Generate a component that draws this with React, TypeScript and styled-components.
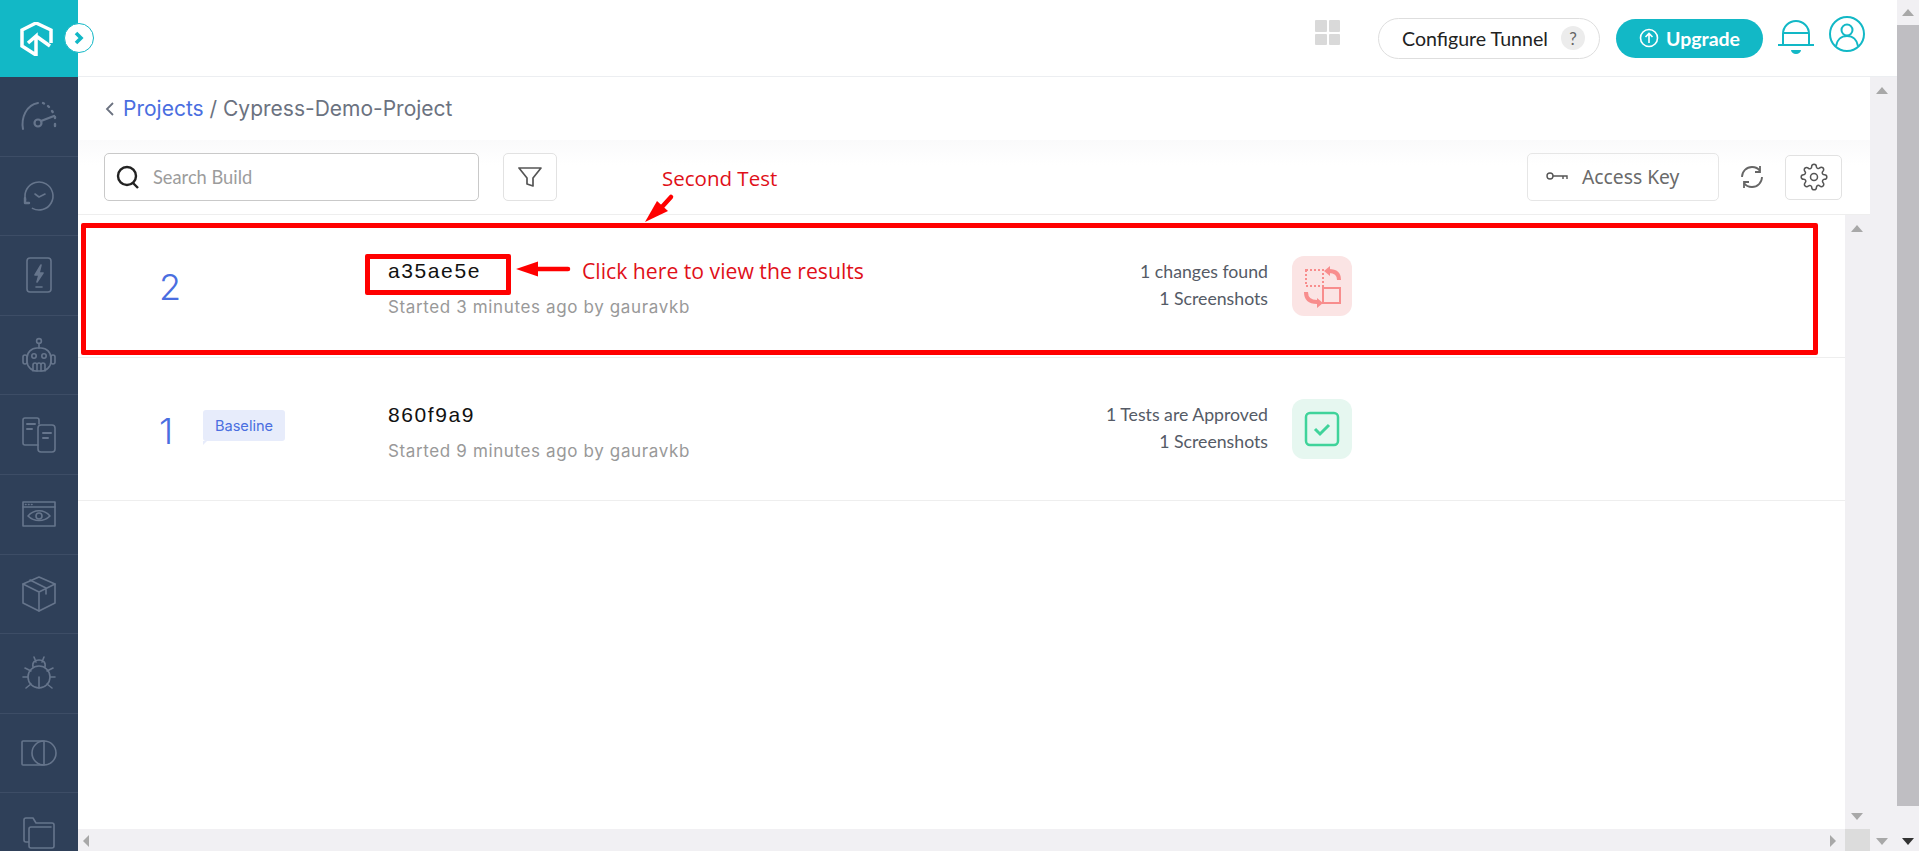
import React from "react";
import styled, { createGlobalStyle } from "styled-components";

const Global = createGlobalStyle`
  html, body { margin: 0; padding: 0; height: 100%; overflow: hidden; background: #fff; }
  #root { height: 851px; }
  * { box-sizing: border-box; }
`;
const Page = styled.div`
  width: 1919px; height: 851px; display: flex; font-family: Inter, sans-serif; background: #fff; position: relative; overflow: hidden;
`;
const Side = styled.aside`
  width: 78px; flex: none; background: #2f4059; display: flex; flex-direction: column;
`;
const LogoCell = styled.div`
  height: 77px; flex: none; background: #12b8c6; display: flex; align-items: center; padding-left: 20px; position: relative;
`;
const Expand = styled.div`
  position: absolute; left: 64px; top: 23px; width: 30px; height: 30px; border-radius: 50%;
  background: #fff; border: 1px solid #12b8c6; display: flex; align-items: center; justify-content: center;
`;
const NavCell = styled.div`
  height: 79.6px; flex: none; display: flex; align-items: center; justify-content: center; border-bottom: 1px solid #3d4d66;
`;
const Right = styled.div`flex: 1; min-width: 0; display: flex;`;
const Column = styled.div`flex: 1; min-width: 0; display: flex; flex-direction: column;`;
const Top = styled.header`
  height: 77px; flex: none; display: flex; align-items: center; justify-content: flex-end; border-bottom: 1px solid #eceef1; background: #fff; padding-right: 32px;
`;
const Grid = styled.div`
  width: 25px; height: 25px; display: grid; grid-template-columns: 1fr 1fr; gap: 2px; margin-right: 38px; margin-bottom: 11px;
  i { background: #d9d9d9; display: block; border-radius: 1px; }
`;
const Pill = styled.div`
  width: 222px; height: 41px; border: 1px solid #dedede; border-radius: 21px; display: flex; align-items: center; padding: 0 14px 0 23px;
  font: 19.6px Lato, sans-serif; color: #222; margin-right: 16px; justify-content: space-between;
`;
const Q = styled.span`
  width: 24px; height: 24px; border-radius: 50%; background: #ececec; color: #666; font-size: 17px; display: flex; align-items: center; justify-content: center;
`;
const Upgrade = styled.div`
  width: 147px; height: 39px; border-radius: 20px; background: #12b8c6; color: #fff; font: 700 19.500px Lato, sans-serif;
  display: flex; align-items: center; justify-content: center; gap: 7px; margin-right: 15px;
`;
const IconSlot = styled.div<{ $mr: number; $mb: number }>`
  display: flex; margin-right: ${(p) => p.$mr}px; margin-bottom: ${(p) => p.$mb}px;
`;
const Body = styled.div`flex: 1; display: flex; min-height: 0;`;
const Main = styled.div`flex: 1; min-width: 0; display: flex; flex-direction: column;`;
const Crumb = styled.div`
  height: 63px; flex: none; display: flex; align-items: center; padding-left: 26px; font-size: 21px; color: #6b7280; gap: 7px;
  a { color: #4a6ee0; }
`;
const Toolbar = styled.div`
  height: 75px; flex: none; display: flex; align-items: center; padding: 0 28px 0 26px; border-bottom: 1px solid #eeeeee;
  background: linear-gradient(#fafafb, #ffffff 25px);
`;
const Search = styled.div`
  width: 375px; height: 48px; border: 1px solid #c9c9c9; border-radius: 5px; display: flex; align-items: center; padding-left: 10px; gap: 12px;
  font: 18.300px Lato, sans-serif; color: #9c9c9c; background: #fff;
`;
const IconBox = styled.div<{ $w: number; $h: number; $ml: number }>`
  width: ${(p) => p.$w}px; height: ${(p) => p.$h}px; margin-left: ${(p) => p.$ml}px;
  border: 1px solid #e2e2e2; border-radius: 5px; display: flex; align-items: center; justify-content: center; background: #fff;
`;
const KeyBox = styled.div`
  width: 192px; height: 48px; border: 1px solid #e6e6e6; border-radius: 5px; margin-left: auto; display: flex; align-items: center; padding: 0 0 2px 18px; gap: 14px;
  font: 19.300px "Noto Sans", sans-serif; color: #6a6a6a;
`;
const Refresh = styled.div`margin: 0 21px 0 21px; display: flex;`;
const ListWrap = styled.div`flex: 1; display: flex; min-height: 0;`;
const List = styled.div`flex: 1; min-width: 0; position: relative;`;
const Row = styled.div`
  height: 143px; border-bottom: 1px solid #eeeeee; display: flex; position: relative;
`;
const NumCol = styled.div<{ $t: number }>`
  width: 156px; padding-left: 81px; display: flex; align-items: flex-start; flex: none; padding-top: ${(p) => p.$t}px;
  font: 300 36px Inter, sans-serif; color: #4a6ee0;
`;
const Badge = styled.span`
  position: absolute; left: 125px; top: 52px; width: 82px; height: 31px; background: #e7ecfb; color: #4a6ee0; border-radius: 3px;
  font: 14.600px Inter, sans-serif; display: flex; align-items: center; justify-content: center;
  &::after { content: ""; position: absolute; left: 0; top: 100%; border-top: 4px solid #e7ecfb; border-right: 4px solid transparent; }
`;
const Info = styled.div<{ $t: number }>`
  margin-left: 154px; width: 500px; padding-top: ${(p) => p.$t}px; display: flex; flex-direction: column; gap: 14px;
`;
const Hash = styled.div`font: 21px "Liberation Sans", sans-serif; letter-spacing: 1.600px; color: #111; line-height: 24px;`;
const Meta = styled.div`font: 17px Inter, sans-serif; color: #999; letter-spacing: .63px; line-height: 20px;`;
const Stats = styled.div`
  position: absolute; right: 577px; top: 43px; text-align: right; font: 17.700px/27px Lato, sans-serif; color: #555b66;
`;
const Status = styled.div<{ $bg: string }>`
  position: absolute; left: 1214px; top: 41px; width: 60px; height: 60px; border-radius: 12px; background: ${(p) => p.$bg};
  display: flex; align-items: center; justify-content: center;
`;
const RedBox = styled.div<{ $x: number; $y: number; $w: number; $h: number }>`
  position: absolute; border: 5px solid #f00; border-radius: 2px; pointer-events: none;
  left: ${(p) => p.$x}px; top: ${(p) => p.$y}px; width: ${(p) => p.$w}px; height: ${(p) => p.$h}px;
`;
const Note = styled.div<{ $x: number; $y: number; $s: number }>`
  position: absolute; left: ${(p) => p.$x}px; top: ${(p) => p.$y}px; font: ${(p) => p.$s}px "Open Sans", sans-serif;
  color: #e01019; white-space: nowrap;
`;
const Mark = styled.svg<{ $x: number; $y: number }>`
  position: absolute; left: ${(p) => p.$x}px; top: ${(p) => p.$y}px;
`;
const Bar = styled.div<{ $w: number }>`
  width: ${(p) => p.$w}px; flex: none; background: #f1f0f3; position: relative;
`;
const Thumb = styled.div`
  position: absolute; left: 0; right: 0; top: 25px; height: 781px; background: #bfbec2;
`;
const Tri = styled.div<{ $d: string; $c: string; $x: number; $y: number }>`
  position: absolute; width: 0; height: 0;
  ${(p) => p.$d === "u" ? `border-left:6px solid transparent;border-right:6px solid transparent;border-bottom:7px solid ${p.$c};` :
    p.$d === "d" ? `border-left:6px solid transparent;border-right:6px solid transparent;border-top:7px solid ${p.$c};` :
    p.$d === "l" ? `border-top:6px solid transparent;border-bottom:6px solid transparent;border-right:6px solid ${p.$c};` :
    `border-top:6px solid transparent;border-bottom:6px solid transparent;border-left:6px solid ${p.$c};`}
  left: ${(p) => p.$x}px; top: ${(p) => p.$y}px;
`;
const HBar = styled.div`
  position: absolute; left: 78px; top: 829px; width: 1767px; height: 22px; background: #f1f0f3;
`;
const Corner = styled.div`
  position: absolute; left: 1845px; top: 829px; width: 25px; height: 22px; background: #dcdcdc;
`;

const S = { fill: "none", stroke: "#66758c", strokeWidth: 1.6, strokeLinecap: "round", strokeLinejoin: "round" } as const;
const navIcons = [
  <svg key="a" width="38" height="32" viewBox="0 0 38 32" {...S}><path d="M3 29C1 18 6 5 18 3" strokeWidth="2"/><path d="M23 3l1 .5M28 6l1 1M32 11l.7 1M35 17v1M35 24v2" strokeWidth="2.4"/><circle cx="18" cy="23" r="3.5" strokeWidth="2.2"/><path d="M21 21l13-5" strokeWidth="2.4"/></svg>,
  <svg key="b" width="32" height="32" viewBox="0 0 32 32" {...S}><circle cx="16" cy="16" r="14" strokeDasharray="76 12" transform="rotate(165 16 16)"/><path d="M2 18v5h4" strokeWidth="2.4"/><path d="M16 17l-4-3M16 17l6-3" /></svg>,
  <svg key="c" width="28" height="38" viewBox="0 0 28 38" {...S}><rect x="2" y="2" width="24" height="34" rx="3"/><path d="M16 9l-6 10h4l-2 7 6-9h-4z" fill="#66758c"/><path d="M11 31h6"/></svg>,
  <svg key="d" width="34" height="36" viewBox="0 0 34 36" {...S}><circle cx="17" cy="4" r="2.4"/><path d="M17 7v4"/><rect x="5" y="11" width="24" height="23" rx="10"/><rect x="1" y="18" width="4" height="9" rx="2"/><rect x="29" y="18" width="4" height="9" rx="2"/><circle cx="12" cy="19" r="2.2"/><circle cx="22" cy="19" r="2.2"/><path d="M11 34v-6a2 2 0 0 1 4 0v6M15 34v-6a2 2 0 0 1 4 0v6M19 34v-6a2 2 0 0 1 4 0v6"/></svg>,
  <svg key="e" width="36" height="38" viewBox="0 0 36 38" {...S}><path d="M17 29H4a2 2 0 0 1-2-2V4a2 2 0 0 1 2-2h12a2 2 0 0 1 2 2v4"/><rect x="17" y="9" width="17" height="27" rx="3"/><path d="M6 8h8M6 13h5M22 17h8M22 22h5" strokeWidth="2"/></svg>,
  <svg key="f" width="34" height="26" viewBox="0 0 34 26" {...S}><rect x="1" y="1" width="32" height="24"/><path d="M1 6h32M3.500 3.500h.5M6.500 3.500h.5M9.500 3.500h.5"/><path d="M6 15c6-7 16-7 22 0-6 6-16 6-22 0z"/><circle cx="17" cy="15" r="3"/></svg>,
  <svg key="g" width="36" height="38" viewBox="0 0 36 38" {...S}><path d="M18 2L34 9v19L18 36 2 28V9z"/><path d="M2 9l16 8 16-8M18 17v19M9 5l16 8v6"/></svg>,
  <svg key="h" width="36" height="36" viewBox="0 0 36 36" {...S}><circle cx="18" cy="22" r="11"/><path d="M18 22v11M12 12C11 7 14 5 18 5s7 2 6 7M13 2l2 5M23 2l-2 5M2 22h5M29 22h5M4 13l6 3M32 13l-6 3M5 33l5-4M31 33l-5-4"/></svg>,
  <svg key="i" width="36" height="26" viewBox="0 0 36 26" {...S}><path d="M22 1H2a1 1 0 0 0-1 1v22a1 1 0 0 0 1 1h20"/><circle cx="23" cy="13" r="12"/><path d="M23 1v24"/></svg>,
  <svg key="j" width="32" height="32" viewBox="0 0 32 32" {...S}><path d="M6 25H3a2 2 0 0 1-2-2V3a2 2 0 0 1 2-2h7l3 5h16a2 2 0 0 1 2 2v21a2 2 0 0 1-2 2H8a2 2 0 0 1-2-2V12a2 2 0 0 1 2-2h20"/></svg>,
];

export default function App() {
  return (
    <Page>
      <Global />
      <Side>
        <LogoCell>
          <svg width="34" height="34" viewBox="0 0 34 34" fill="none" stroke="#fff" strokeWidth="3.500" strokeLinejoin="miter">
            <path d="M31 21V8L16 1 2 8v16l14 9V14l-8 7M16 14l14 10"/>
          </svg>
          <Expand>
            <svg width="12" height="14" viewBox="0 0 12 14" fill="none" stroke="#12b8c6" strokeWidth="3.600"><path d="M3 2l5 5-5 5"/></svg>
          </Expand>
        </LogoCell>
        {navIcons.map((ic, i) => <NavCell key={i}>{ic}</NavCell>)}
      </Side>
      <Right>
        <Column>
          <Top>
            <Grid><i/><i/><i/><i/></Grid>
            <Pill>Configure Tunnel<Q>?</Q></Pill>
            <Upgrade>
              <svg width="20" height="20" viewBox="0 0 20 20" fill="none" stroke="#fff" strokeWidth="1.600"><circle cx="10" cy="10" r="8.500"/><path d="M10 15V6M6.500 9L10 5.500 13.500 9"/></svg>
              Upgrade
            </Upgrade>
            <IconSlot $mr={15} $mb={0}>
              <svg width="36" height="36" viewBox="0 0 36 36" fill="none" stroke="#12b8c6" strokeWidth="2"><path d="M5 25V14a13 13 0 0 1 26 0v11M5 13h26M0 25h36" /><path d="M13 30h10a5 4 0 0 1-10 0z" fill="#12b8c6" stroke="none"/></svg>
            </IconSlot>
            <IconSlot $mr={0} $mb={8}>
              <svg width="36" height="36" viewBox="0 0 36 36" fill="none" stroke="#12b8c6" strokeWidth="2"><circle cx="18" cy="18" r="17"/><circle cx="18" cy="14" r="5.500"/><path d="M7 30c1-6 5-10 11-10s10 4 11 10"/></svg>
            </IconSlot>
          </Top>
          <Body>
            <Main>
              <Crumb>
                <svg width="12" height="16" viewBox="0 0 12 16" fill="none" stroke="#6b7280" strokeWidth="1.800"><path d="M9 2L3 8l6 6"/></svg>
                <span><a>Projects</a> / Cypress-Demo-Project</span>
              </Crumb>
              <Toolbar>
                <Search>
                  <svg width="26" height="26" viewBox="0 0 26 26" fill="none" stroke="#222" strokeWidth="2.400"><circle cx="12" cy="12" r="9"/><path d="M18 19l5 5"/></svg>
                  Search Build
                </Search>
                <IconBox $w={54} $h={48} $ml={24}>
                  <svg width="24" height="24" viewBox="0 0 24 24" fill="none" stroke="#555" strokeWidth="1.700" strokeLinejoin="round"><path d="M1 3h22l-8 10v8l-6-2v-6z"/></svg>
                </IconBox>
                <KeyBox>
                  <svg width="22" height="10" viewBox="0 0 22 10" fill="none" stroke="#555" strokeWidth="1.400"><circle cx="4" cy="5" r="3"/><path d="M7 5h14v3M17 5v3"/></svg>
                  Access Key
                </KeyBox>
                <Refresh>
                  <svg width="24" height="26" viewBox="0 0 24 26" fill="none" stroke="#666" strokeWidth="1.800"><path d="M2 13a10 10 0 0 1 10-10c3 0 6 1 8 4M22 13a10 10 0 0 1-10 10c-3 0-6-1-8-4"/><path d="M20 2v6h-5M4 24v-6h5"/></svg>
                </Refresh>
                <IconBox $w={57} $h={45} $ml={0}>
                  <svg width="28" height="28" viewBox="0 0 24 24" fill="none" stroke="#555" strokeWidth="1.300" strokeLinecap="round" strokeLinejoin="round"><circle cx="12" cy="12" r="3"/><path d="M19.400 15a1.650 1.650 0 0 0 .33 1.820l.06.06a2 2 0 1 1-2.830 2.830l-.06-.06a1.650 1.650 0 0 0-2.820 1.170V21a2 2 0 1 1-4 0v-.09A1.650 1.650 0 0 0 7.270 19.700l-.06.06a2 2 0 1 1-2.830-2.830l.06-.06A1.650 1.650 0 0 0 3.270 14H3a2 2 0 1 1 0-4h.09A1.650 1.650 0 0 0 4.300 7.270l-.06-.06a2 2 0 1 1 2.830-2.830l.06.06A1.650 1.650 0 0 0 10 3.270V3a2 2 0 1 1 4 0v.09a1.650 1.650 0 0 0 2.820 1.170l.06-.06a2 2 0 1 1 2.830 2.830l-.06.06A1.650 1.650 0 0 0 20.730 10H21a2 2 0 1 1 0 4h-.09a1.650 1.650 0 0 0-1.510 1z"/></svg>
                </IconBox>
              </Toolbar>
              <ListWrap>
                <List>
                  <Row>
                    <NumCol $t={50}>2</NumCol>
                    <Info $t={44}><Hash>a35ae5e</Hash><Meta>Started 3 minutes ago by gauravkb</Meta></Info>
                    <Stats>1 changes found<br/>1 Screenshots</Stats>
                    <Status $bg="#fbe4e4">
                      <svg width="60" height="60" viewBox="0 0 60 60" fill="none" stroke="#f88d8d" strokeWidth="2"><rect x="14" y="14" width="17" height="16" strokeDasharray="2 2"/><rect x="31" y="32" width="17" height="15"/><path d="M37 15c6 0 10 2 10 9" strokeWidth="4"/><path d="M14 36c0 6 3 10 11 10" strokeWidth="4"/><path d="M32 15l6-5v10zM31 47l-6-5v10z" fill="#f88d8d" stroke="none"/></svg>
                    </Status>
                  </Row>
                  <Row>
                    <NumCol $t={51}>1</NumCol>
                    <Badge>Baseline</Badge>
                    <Info $t={45}><Hash>860f9a9</Hash><Meta>Started 9 minutes ago by gauravkb</Meta></Info>
                    <Stats>1 Tests are Approved<br/>1 Screenshots</Stats>
                    <Status $bg="#e6f7f0">
                      <svg width="36" height="36" viewBox="0 0 36 36" fill="none" stroke="#3fd39a" strokeWidth="2.500"><rect x="2" y="2" width="32" height="32" rx="4"/><path d="M11 18l5 5 9-9" strokeWidth="3"/></svg>
                    </Status>
                  </Row>
                  <RedBox $x={3} $y={8} $w={1737} $h={132} />
                  <RedBox $x={287} $y={39} $w={146} $h={41} />
                </List>
                <Bar $w={25}><Tri $d="u" $c="#a8a8a8" $x={6} $y={10}/><Tri $d="d" $c="#a8a8a8" $x={6} $y={598}/></Bar>
              </ListWrap>
            </Main>
            <Bar $w={27}><Tri $d="u" $c="#a8a8a8" $x={6} $y={10}/></Bar>
          </Body>
        </Column>
        <Bar $w={22}>
          <Thumb/>
          <Tri $d="u" $c="#a8a8a8" $x={5} $y={9}/>
          <Tri $d="d" $c="#333" $x={5} $y={838}/>
        </Bar>
      </Right>
      <HBar><Tri $d="l" $c="#a8a8a8" $x={5} $y={6}/><Tri $d="r" $c="#a8a8a8" $x={1752} $y={6}/></HBar>
      <Corner />
      <Tri $d="d" $c="#a8a8a8" $x={1876} $y={838}/>
      <Note $x={662} $y={164} $s={20.500}>Second Test</Note>
      <Note $x={582} $y={256} $s={21.200}>Click here to view the results</Note>
      <Mark $x={640} $y={188} width="40" height="40" viewBox="0 0 40 40" fill="#f00" stroke="#f00"><path d="M31 9L21 20" strokeWidth="4.500" strokeLinecap="round"/><path d="M5 34l12-21 11 10z" stroke="none"/></Mark>
      <Mark $x={513} $y={259} width="60" height="20" viewBox="0 0 60 20" fill="#f00" stroke="#f00"><path d="M22 10h33" strokeWidth="4.500" strokeLinecap="round"/><path d="M3 10l22-7.500v15z" stroke="none"/></Mark>
    </Page>
  );
}
